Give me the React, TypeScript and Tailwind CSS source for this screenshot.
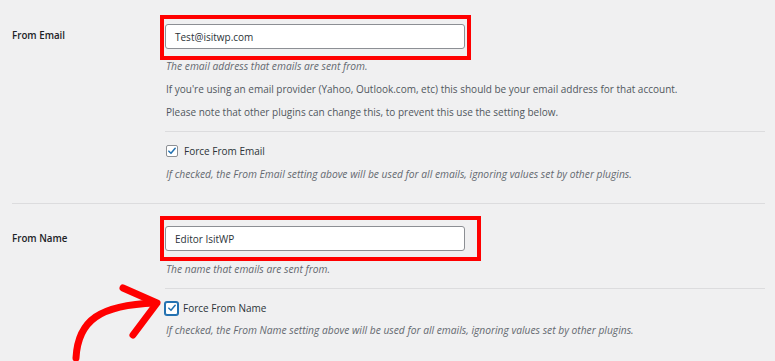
import React from 'react';

const font = { fontFamily: '"Open Sans", "Noto Sans", sans-serif' };

function Check({ focused }: { focused?: boolean }) {
  return (
    <span
      className={
        focused
          ? 'relative flex h-[13px] w-[13px] items-center justify-center rounded-[2px] border border-[#2271b1] bg-white shadow-[0_0_0_1px_#2271b1]'
          : 'relative flex h-[12px] w-[12px] items-center justify-center rounded-[2px] border border-[#8c8f94] bg-white'
      }
    >
      <svg viewBox="0 0 12 12" className="h-[10px] w-[10px]">
        <path d="M2.2 6.2 L4.8 8.8 L9.8 2.8" fill="none" stroke="#2271b1" strokeWidth="1.8" strokeLinecap="round" strokeLinejoin="round" />
      </svg>
    </span>
  );
}

function Field({ value }: { value: string }) {
  return (
    <div className="flex h-[25px] w-[300px] items-center rounded-[3px] border border-[#8c8f94] bg-white px-[9px] text-[10px] text-[#2c3338]">
      {value}
    </div>
  );
}

export default function App() {
  return (
    <div className="relative h-[361px] w-[775px] overflow-hidden bg-[#f0f0f1]" style={font}>
      <div className="pl-[12px] pr-[10px]">
        {/* From Email */}
        <div className="flex border-b border-[#dcdcde] pb-[22px] pt-[24px]">
          <div className="w-[153px] pt-[5px] text-[9.75px] font-semibold leading-[14px] text-[#1d2327]">From Email</div>
          <div className="w-[600px] text-[10px] leading-[14px] text-[#50575e]">
            <Field value="Test@isitwp.com" />
            <p className="mt-[10px] pl-[1px] text-[10.25px] italic text-[#646970]">The email address that emails are sent from.</p>
            <p className="mt-[9px] pl-[1px]">If you're using an email provider (Yahoo, Outlook.com, etc) this should be your email address for that account.</p>
            <p className="mt-[9px] pl-[1px]">Please note that other plugins can change this, to prevent this use the setting below.</p>
            <div className="mt-[12px] h-px bg-[#dcdcde]" />
            <label className="mt-[12px] flex items-center gap-[6px] pl-[1px] text-[#2c3338]">
              <Check />
              <span className="text-[10px]">Force From Email</span>
            </label>
            <p className="mt-[9px] pl-[1px] text-[10.25px] italic text-[#646970]">If checked, the From Email setting above will be used for all emails, ignoring values set by other plugins.</p>
          </div>
        </div>

        {/* From Name */}
        <div className="flex pt-[22px]">
          <div className="w-[153px] pt-[6px] text-[9.75px] font-semibold leading-[14px] text-[#1d2327]">From Name</div>
          <div className="w-[600px] text-[10px] leading-[14px] text-[#50575e]">
            <Field value="Editor IsitWP" />
            <p className="mt-[11px] pl-[1px] text-[10.25px] italic text-[#646970]">The name that emails are sent from.</p>
            <div className="mt-[12px] h-px bg-[#dcdcde]" />
            <label className="mt-[12px] flex items-center gap-[5px] text-[#2c3338]">
              <Check focused />
              <span className="text-[10px]">Force From Name</span>
            </label>
            <p className="mt-[8px] pl-[1px] text-[10.25px] italic text-[#646970]">If checked, the From Name setting above will be used for all emails, ignoring values set by other plugins.</p>
          </div>
        </div>
      </div>

      {/* annotations */}
      <div className="pointer-events-none absolute left-[160px] top-[15px] h-[45px] w-[311px] border-[4px] border-[#ff0000]" />
      <div className="pointer-events-none absolute left-[160px] top-[216px] h-[45px] w-[321px] border-[4px] border-[#ff0000]" />
      <svg className="pointer-events-none absolute left-0 top-0" width="775" height="361" viewBox="0 0 775 361">
        <g fill="none" stroke="#ff0000" strokeWidth="7" strokeLinecap="round" strokeLinejoin="round">
          <path d="M76 358 C 78 320, 100 305, 155 303" />
          <path d="M123 288 L157 303 L133 335" />
        </g>
      </svg>
    </div>
  );
}
